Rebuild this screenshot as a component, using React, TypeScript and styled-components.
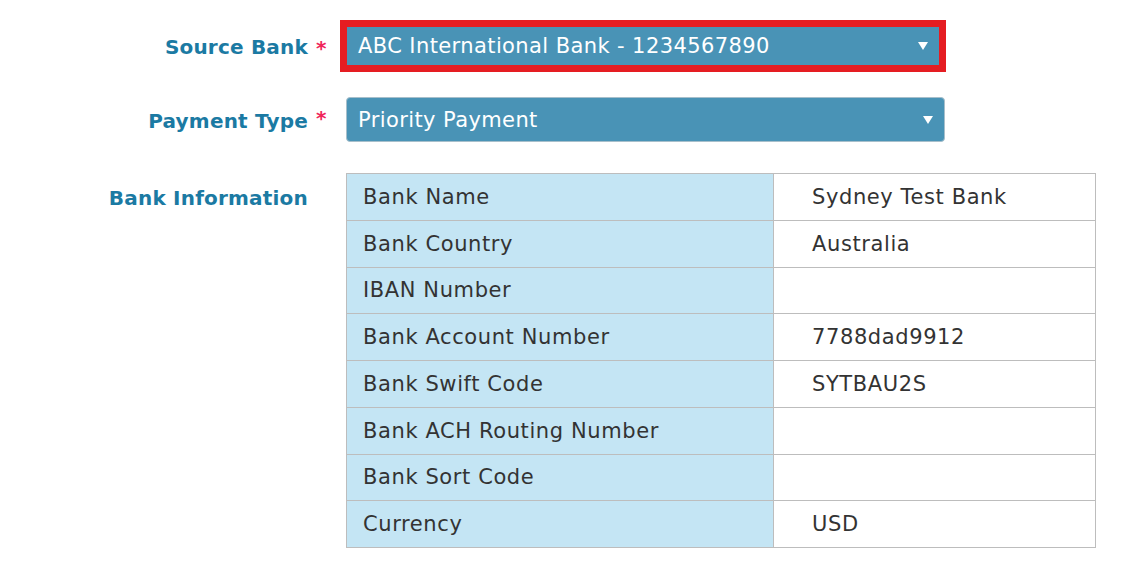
import React from "react";
import styled, { createGlobalStyle } from "styled-components";

const GlobalStyle = createGlobalStyle`
  html, body { margin: 0; padding: 0; background: #ffffff; }
  body { font-family: "DejaVu Sans", "Open Sans", "Liberation Sans", sans-serif; }
  * { box-sizing: border-box; }
`;

const Page = styled.div`
  width: 1146px;
  height: 562px;
  padding-top: 27px;
  background: #ffffff;
`;

const Form = styled.div`
  display: grid;
  grid-template-columns: 326px 750px;
  column-gap: 20px;
  align-items: start;
`;

const Label = styled.div<{ $h: number; $mt: number }>`
  display: flex;
  justify-content: flex-end;
  align-items: center;
  height: ${(p) => p.$h}px;
  margin-top: ${(p) => p.$mt}px;
  padding-top: 2px;
  font-size: 20px;
  font-weight: 700;
  letter-spacing: 0.2px;
  color: #1b7aa3;
  white-space: nowrap;
`;

const Required = styled.span`
  display: inline-block;
  width: 18px;
  padding-left: 8px;
  color: #f0245a;
  font-weight: 700;
  font-size: 20px;
  align-self: flex-start;
  line-height: 1;
  margin-top: 9px;
`;

const Field = styled.div<{ $mt: number }>`
  margin-top: ${(p) => p.$mt}px;
`;

const Select = styled.div<{ $highlight?: boolean; $w: number; $h: number }>`
  display: flex;
  align-items: center;
  justify-content: space-between;
  width: ${(p) => p.$w}px;
  height: ${(p) => p.$h}px;
  margin-left: ${(p) => (p.$highlight ? 1 : 0)}px;
  padding: 0 11px 0 11px;
  background: #4993b6;
  color: #ffffff;
  font-size: 21px;
  letter-spacing: 0.4px;
  border-radius: ${(p) => (p.$highlight ? 0 : 4)}px;
  border: ${(p) => (p.$highlight ? "none" : "1px solid #a7bfcb")};
  outline: ${(p) => (p.$highlight ? "7px solid #e51d22" : "none")};
  white-space: nowrap;
`;

const Caret = styled.svg`
  width: 10px;
  height: 8px;
  flex: none;
`;

const Table = styled.table`
  width: 750px;
  border-collapse: collapse;
  font-size: 21px;
  letter-spacing: 0.6px;
  color: #333333;
`;

const Row = styled.tr`
  height: 46.75px;
`;

const KeyCell = styled.td`
  width: 427px;
  padding: 0 0 0 16px;
  background: #c4e5f4;
  border: 1px solid #bdbdbd;
  vertical-align: middle;
`;

const ValueCell = styled.td`
  padding: 0 0 0 38px;
  background: #ffffff;
  border: 1px solid #bdbdbd;
  vertical-align: middle;
`;

const CaretIcon = () => (
  <Caret viewBox="0 0 10 8">
    <path d="M0 0 H10 L5 8 Z" fill="#ffffff" />
  </Caret>
);

const rows: [string, string][] = [
  ["Bank Name", "Sydney Test Bank"],
  ["Bank Country", "Australia"],
  ["IBAN Number", ""],
  ["Bank Account Number", "7788dad9912"],
  ["Bank Swift Code", "SYTBAU2S"],
  ["Bank ACH Routing Number", ""],
  ["Bank Sort Code", ""],
  ["Currency", "USD"],
];

export default function App() {
  return (
    <>
      <GlobalStyle />
      <Page>
        <Form>
          <Label $h={38} $mt={0}>
            Source Bank<Required>*</Required>
          </Label>
          <Field $mt={0}>
            <Select $highlight $w={592} $h={38}>
              <span>ABC International Bank - 1234567890</span>
              <CaretIcon />
            </Select>
          </Field>

          <Label $h={45} $mt={32}>
            Payment Type<Required>*</Required>
          </Label>
          <Field $mt={32}>
            <Select $w={599} $h={45}>
              <span>Priority Payment</span>
              <CaretIcon />
            </Select>
          </Field>

          <Label $h={47} $mt={31}>
            Bank Information<Required />
          </Label>
          <Field $mt={31}>
            <Table>
              <tbody>
                {rows.map(([k, v]) => (
                  <Row key={k}>
                    <KeyCell>{k}</KeyCell>
                    <ValueCell>{v}</ValueCell>
                  </Row>
                ))}
              </tbody>
            </Table>
          </Field>
        </Form>
      </Page>
    </>
  );
}
